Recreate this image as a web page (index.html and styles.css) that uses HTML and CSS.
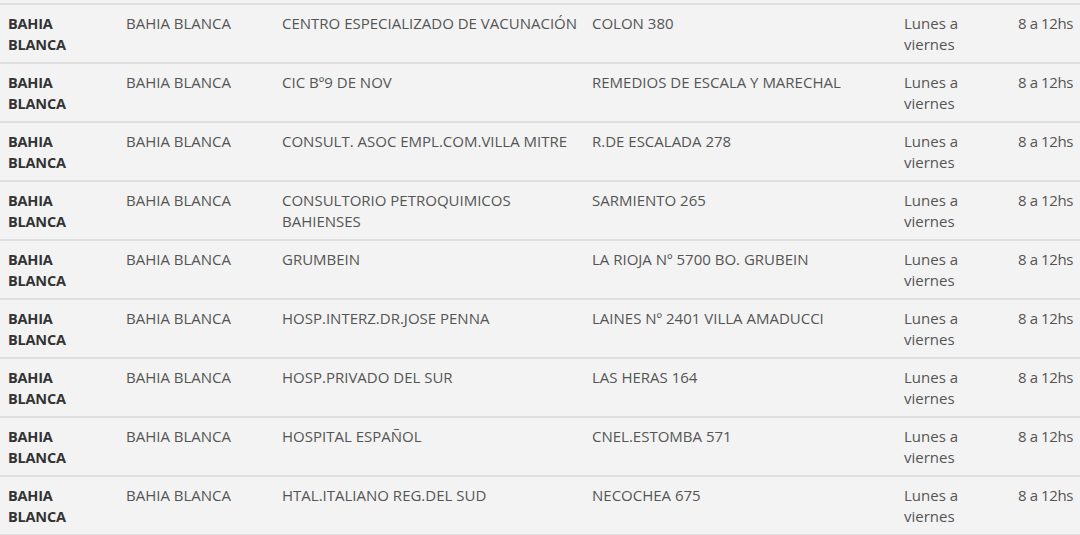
FILE: index.html
```html
<!DOCTYPE html>
<html lang="es">
<head>
    <meta charset="UTF-8">
    <meta name="viewport" content="width=device-width, initial-scale=1.0">
    <title>Vacunatorios</title>
    <link rel="stylesheet" href="styles.css">
</head>
<body>
    <table class="centros">
        <colgroup>
            <col class="c-partido">
            <col class="c-localidad">
            <col class="c-centro">
            <col class="c-direccion">
            <col class="c-dias">
            <col class="c-horario">
        </colgroup>
        <tbody>
            <tr>
                <td class="partido">BAHIA BLANCA</td>
                <td>BAHIA BLANCA</td>
                <td>CENTRO ESPECIALIZADO DE VACUNACIÓN</td>
                <td>COLON 380</td>
                <td>Lunes a viernes</td>
                <td class="horario">8 a 12hs</td>
            </tr>
            <tr>
                <td class="partido">BAHIA BLANCA</td>
                <td>BAHIA BLANCA</td>
                <td>CIC Bº9 DE NOV</td>
                <td>REMEDIOS DE ESCALA Y MARECHAL</td>
                <td>Lunes a viernes</td>
                <td class="horario">8 a 12hs</td>
            </tr>
            <tr>
                <td class="partido">BAHIA BLANCA</td>
                <td>BAHIA BLANCA</td>
                <td>CONSULT. ASOC EMPL.COM.VILLA MITRE</td>
                <td>R.DE ESCALADA 278</td>
                <td>Lunes a viernes</td>
                <td class="horario">8 a 12hs</td>
            </tr>
            <tr>
                <td class="partido">BAHIA BLANCA</td>
                <td>BAHIA BLANCA</td>
                <td>CONSULTORIO PETROQUIMICOS BAHIENSES</td>
                <td>SARMIENTO 265</td>
                <td>Lunes a viernes</td>
                <td class="horario">8 a 12hs</td>
            </tr>
            <tr>
                <td class="partido">BAHIA BLANCA</td>
                <td>BAHIA BLANCA</td>
                <td>GRUMBEIN</td>
                <td>LA RIOJA Nº 5700 BO. GRUBEIN</td>
                <td>Lunes a viernes</td>
                <td class="horario">8 a 12hs</td>
            </tr>
            <tr>
                <td class="partido">BAHIA BLANCA</td>
                <td>BAHIA BLANCA</td>
                <td>HOSP.INTERZ.DR.JOSE PENNA</td>
                <td>LAINES Nº 2401 VILLA AMADUCCI</td>
                <td>Lunes a viernes</td>
                <td class="horario">8 a 12hs</td>
            </tr>
            <tr>
                <td class="partido">BAHIA BLANCA</td>
                <td>BAHIA BLANCA</td>
                <td>HOSP.PRIVADO DEL SUR</td>
                <td>LAS HERAS 164</td>
                <td>Lunes a viernes</td>
                <td class="horario">8 a 12hs</td>
            </tr>
            <tr>
                <td class="partido">BAHIA BLANCA</td>
                <td>BAHIA BLANCA</td>
                <td>HOSPITAL ESPAÑOL</td>
                <td>CNEL.ESTOMBA 571</td>
                <td>Lunes a viernes</td>
                <td class="horario">8 a 12hs</td>
            </tr>
            <tr>
                <td class="partido">BAHIA BLANCA</td>
                <td>BAHIA BLANCA</td>
                <td>HTAL.ITALIANO REG.DEL SUD</td>
                <td>NECOCHEA 675</td>
                <td>Lunes a viernes</td>
                <td class="horario">8 a 12hs</td>
            </tr>
        </tbody>
    </table>
</body>
</html>
```

FILE: styles.css
```css
body {
    font-family: "Open Sans", "Liberation Sans", Arial, sans-serif;
    font-size: 15px;
    color: #555;
    background-color: #f3f3f3;
    margin: 0;
    padding-top: 3px;
}
.centros {
    width: 100%;
    table-layout: fixed;
    border-collapse: collapse;
}
.c-partido { width: 118px; }
.c-localidad { width: 156px; }
.c-centro { width: 310px; }
.c-direccion { width: 312px; }
.c-dias { width: 114px; }
.c-horario { width: 70px; }
.centros tr {
    border-top: 2px solid #dfdfdf;
    border-bottom: 2px solid #dfdfdf;
}
.centros td {
    padding: 8px 4px 7px 8px;
    line-height: 21px;
    vertical-align: top;
}
.centros td.partido {
    padding-right: 14px;
    font-size: 14.5px;
    font-weight: 700;
    color: #333;
    letter-spacing: -0.2px;
}
.centros td.horario {
    white-space: nowrap;
    letter-spacing: -0.4px;
}
```
